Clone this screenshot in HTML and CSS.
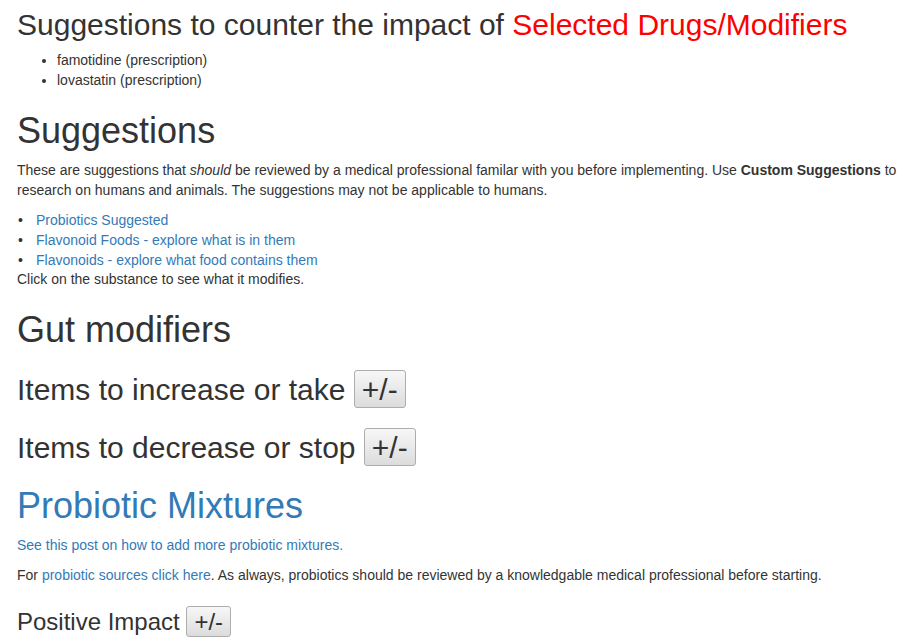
FILE: index.html
```html
<!DOCTYPE html>
<html lang="en">
<head>
  <meta charset="UTF-8">
  <meta name="viewport" content="width=device-width, initial-scale=1.0">
  <title>Suggestions</title>
  <link rel="stylesheet" href="styles.css">
</head>
<body>

  <div class="page">
    <h2 class="first-title">Suggestions to counter the impact of <span class="highlight">Selected Drugs/Modifiers</span></h2>
    <ul>
      <li>famotidine (prescription)</li>
      <li>lovastatin (prescription)</li>
    </ul>

    <h1>Suggestions</h1>
    <p>These are suggestions that <i>should</i> be reviewed by a medical professional familar with you before implementing. Use <b>Custom Suggestions</b> to research on humans and animals. The suggestions may not be applicable to humans.</p>
    <ul class="link-list">
      <li><a href="#">Probiotics Suggested</a></li>
      <li><a href="#">Flavonoid Foods - explore what is in them</a></li>
      <li><a href="#">Flavonoids - explore what food contains them</a></li>
    </ul>
    Click on the substance to see what it modifies.

    <h1>Gut modifiers</h1>
    <h2>Items to increase or take <button class="toggle">+/-</button></h2>
    <h2>Items to decrease or stop <button class="toggle">+/-</button></h2>

    <h1 class="mixtures">Probiotic Mixtures</h1>
    <p><a href="#">See this post on how to add more probiotic mixtures.</a></p>
    <p>For <a href="#">probiotic sources click here</a>. As always, probiotics should be reviewed by a knowledgable medical professional before starting.</p>

    <h3>Positive Impact <button class="toggle">+/-</button></h3>
  </div>

</body>
</html>
```

FILE: styles.css
```css
* {
  box-sizing: border-box;
}

body {
  margin: 0;
  font-family: "Liberation Sans", Arial, sans-serif;
  font-size: 14px;
  line-height: 1.42857;
  color: #333;
  background: #fff;
}

.page {
  padding: 0 0 0 17px;
}

h1, h2, h3 {
  font-weight: 500;
  line-height: 1.1;
  margin: 20px 0 10px;
}

h1 {
  font-size: 36px;
}

h2 {
  font-size: 30px;
}

h3 {
  font-size: 24px;
}

p {
  margin: 0 0 10px;
}

ul {
  margin: 0 0 10px;
  padding-left: 40px;
}

a {
  color: #337ab7;
  text-decoration: none;
}

.first-title {
  margin-top: 8px;
}

.highlight {
  color: #ff0000;
}

.mixtures {
  color: #337ab7;
}

.link-list {
  list-style: none;
  padding-left: 1px;
  margin: 0;
}

.link-list li::before {
  content: "\2022";
  display: inline-block;
  width: 18px;
  color: #333;
}

.toggle {
  font: inherit;
  line-height: inherit;
  color: #333;
  margin: 0;
  padding: 2px 7px 1px;
  border: 1px solid #adadad;
  border-radius: 3px;
  background: linear-gradient(#f7f7f7, #dcdcdc);
  cursor: pointer;
}
```
